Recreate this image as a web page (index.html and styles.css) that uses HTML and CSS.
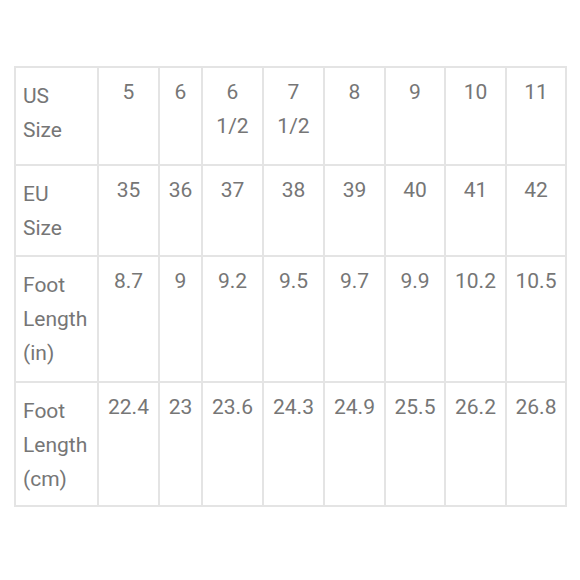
FILE: index.html
```html
<!DOCTYPE html>
<html>
<head>
<meta charset="utf-8">
<link rel="stylesheet" href="styles.css">
</head>
<body>
<table class="size-table">
  <colgroup>
    <col class="c-label">
    <col class="c61">
    <col class="c43">
    <col class="c61">
    <col class="c61">
    <col class="c61">
    <col class="c60">
    <col class="c61">
    <col class="c60">
  </colgroup>
  <tr class="r1">
    <td class="label">US<br>Size</td>
    <td>5</td><td>6</td><td>6<br>1/2</td><td>7<br>1/2</td><td>8</td><td>9</td><td>10</td><td>11</td>
  </tr>
  <tr class="r2">
    <td class="label">EU<br>Size</td>
    <td>35</td><td>36</td><td>37</td><td>38</td><td>39</td><td>40</td><td>41</td><td>42</td>
  </tr>
  <tr class="r3">
    <td class="label">Foot<br>Length<br>(in)</td>
    <td>8.7</td><td>9</td><td>9.2</td><td>9.5</td><td>9.7</td><td>9.9</td><td>10.2</td><td>10.5</td>
  </tr>
  <tr class="r4">
    <td class="label">Foot<br>Length<br>(cm)</td>
    <td>22.4</td><td>23</td><td>23.6</td><td>24.3</td><td>24.9</td><td>25.5</td><td>26.2</td><td>26.8</td>
  </tr>
</table>
</body>
</html>
```

FILE: styles.css
```css
html, body {
  margin: 0;
  padding: 0;
  background: #ffffff;
}

.size-table {
  margin: 66px 0 0 14px;
  border-collapse: collapse;
  table-layout: fixed;
  width: 553px;
  font-family: Roboto, "Liberation Sans", sans-serif;
  font-size: 21px;
  line-height: 34px;
  color: #767676;
}

.c-label { width: 83px; }
.c61 { width: 61px; }
.c60 { width: 60px; }
.c43 { width: 43px; }

.size-table td {
  box-sizing: border-box;
  border: 2px solid #e4e4e4;
  vertical-align: top;
  text-align: center;
  padding: 7px 0 0 0;
  white-space: nowrap;
}

.size-table td.label {
  text-align: left;
  padding: 11px 0 0 7px;
}

.r1 td { height: 98px; }
.r2 td { height: 91px; }
.r3 td { height: 126px; }
.r4 td { height: 124px; }
```
